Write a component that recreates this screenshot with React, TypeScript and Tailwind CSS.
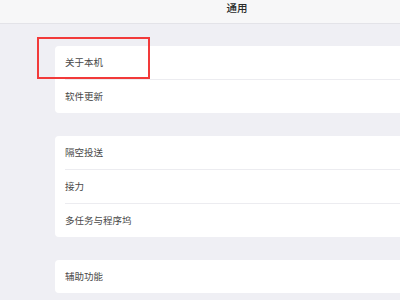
const groups = [
  ["关于本机", "软件更新"],
  ["隔空投送", "接力", "多任务与程序坞"],
  ["辅助功能"],
];

export default function App() {
  return (
    <div
      className="relative w-[400px] h-[300px] overflow-hidden bg-[#efeff4]"
      style={{ fontFamily: '"Noto Sans CJK SC", "Noto Sans", sans-serif' }}
    >
      {/* Nav bar */}
      <div className="h-[24px] bg-[#f7f7f8] border-b border-[#e3e3e8] flex items-center justify-center pl-[74px]">
        <span className="text-[10.5px] font-medium text-[#2a2a2a] leading-none -mt-[7px]">
          通用
        </span>
      </div>

      {/* Groups */}
      <div className="pt-[22px] pl-[55px] flex flex-col gap-[23px]">
        {groups.map((rows, gi) => (
          <div key={gi} className="bg-white rounded-[4px] w-[360px]">
            {rows.map((label, i) => (
              <div key={label}>
                {i > 0 && <div className="ml-[10px] h-px bg-[#ececf0]" />}
                <div className="h-[33px] flex items-center pl-[10px] text-[9.5px] text-[#484848]">
                  {label}
                </div>
              </div>
            ))}
          </div>
        ))}
      </div>

      {/* Highlight annotation */}
      <div className="absolute left-[37px] top-[37px] w-[113px] h-[42px] border-[2.5px] border-[#f23a3a]" />
    </div>
  );
}
